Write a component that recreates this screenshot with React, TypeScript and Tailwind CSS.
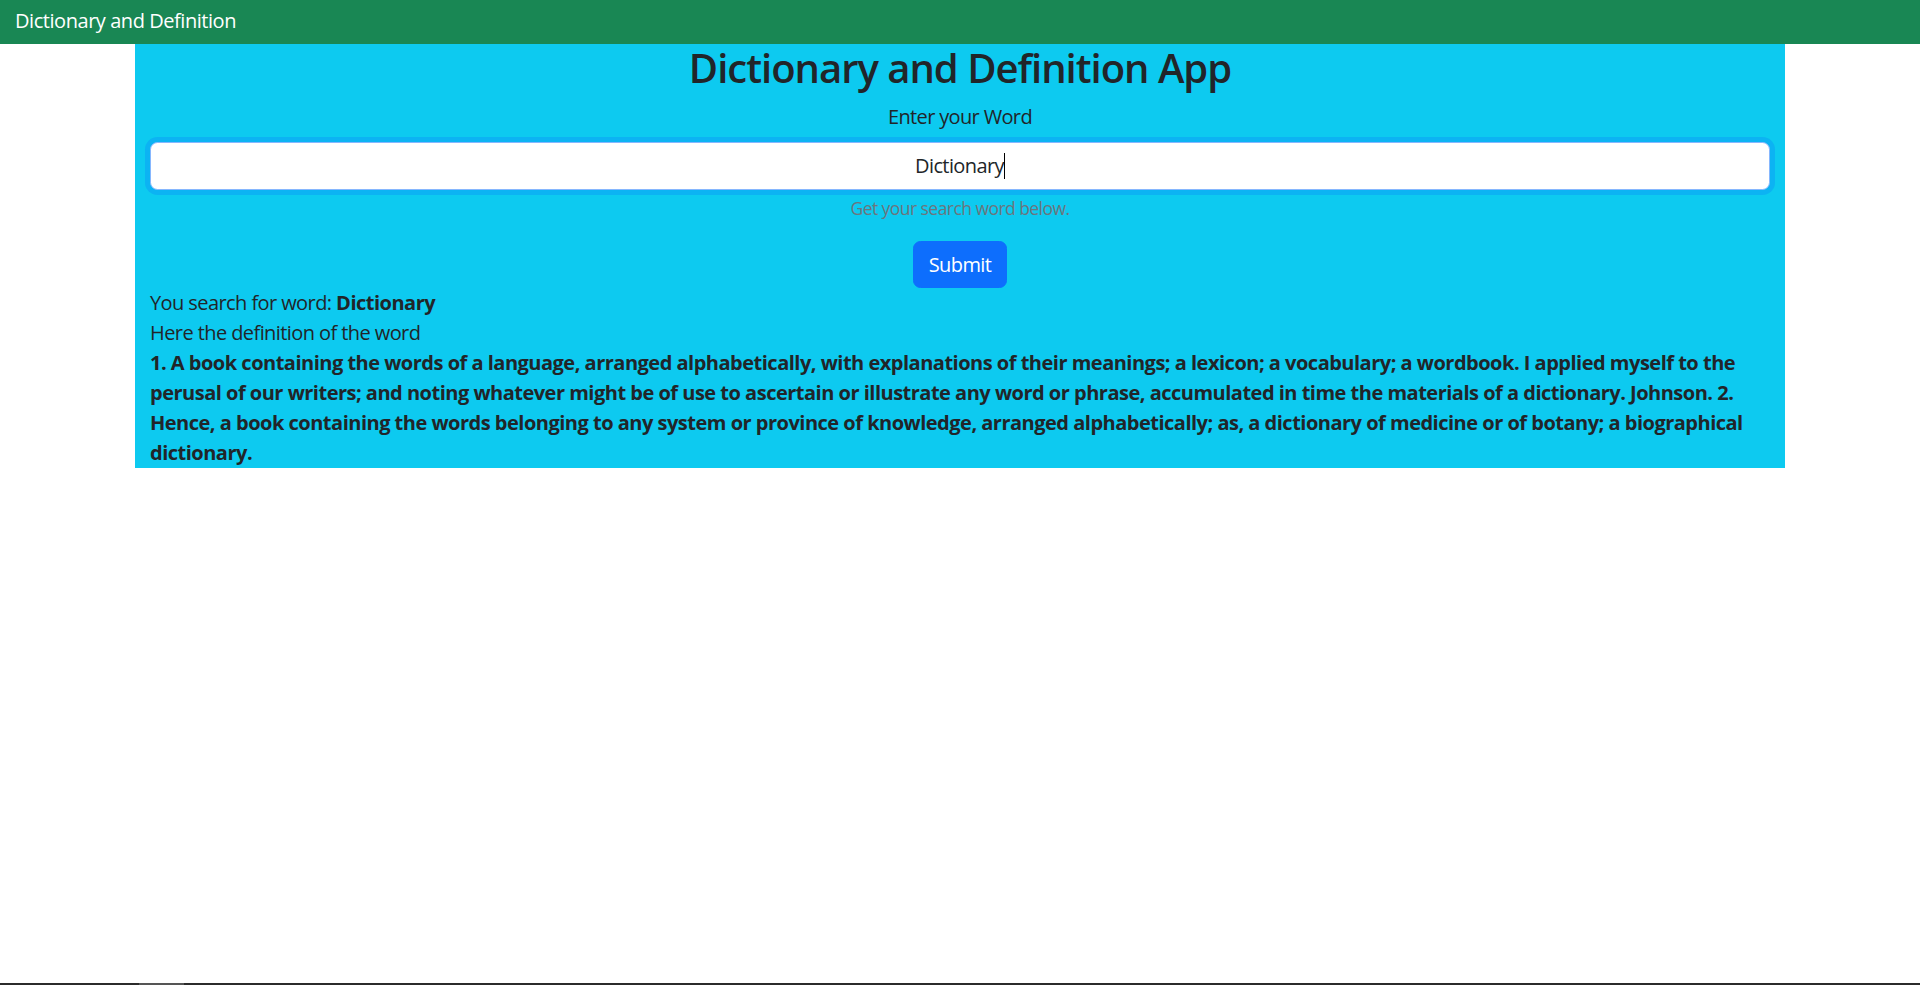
import React from "react";

const DEF =
  "1. A book containing the words of a language, arranged alphabetically, with explanations of their meanings; a lexicon; a vocabulary; a wordbook. I applied myself to the perusal of our writers; and noting whatever might be of use to ascertain or illustrate any word or phrase, accumulated in time the materials of a dictionary. Johnson. 2. Hence, a book containing the words belonging to any system or province of knowledge, arranged alphabetically; as, a dictionary of medicine or of botany; a biographical dictionary.";

export default function App() {
  return (
    <div className="flex h-[985px] flex-col bg-white text-[#212529] [font-family:'Open_Sans',sans-serif]">
      <nav className="flex h-[44px] items-center bg-[#198754] px-[15px] pb-[2px] text-[20px] tracking-[-0.45px] text-white">
        Dictionary and Definition
      </nav>
      <main className="mx-auto w-[1650px] bg-[#0dcaf0] px-[15px]">
        <h1 className="mb-[10px] text-center text-[40px] leading-[48px] font-semibold tracking-[-1px]">
          Dictionary and Definition App
        </h1>
        <div className="mb-[10px] text-center text-[20px] leading-[30px] tracking-[-0.65px]">
          Enter your Word
        </div>
        <div className="flex h-[47.5px] items-center justify-center rounded-[7.5px] border-[1.25px] border-[#86b7fe] bg-white text-[20px] tracking-[-0.6px] shadow-[0_0_0_5px_rgba(13,110,253,0.25)]">
          <span>Dictionary</span>
          <span className="inline-block h-[26px] w-px bg-black" />
        </div>
        <div className="mt-[5px] text-center text-[17.5px] leading-[26.25px] tracking-[-0.55px] text-[#6c757d]">
          Get your search word below.
        </div>
        <div className="mt-[20px] flex justify-center">
          <button className="h-[47.5px] rounded-[7.5px] border-[1.25px] border-[#0d6efd] bg-[#0d6efd] px-[15px] text-[20px] tracking-[-0.6px] text-white">
            Submit
          </button>
        </div>
        <div className="text-[20px] leading-[30px] tracking-[-0.58px]">
          <div>
            You search for word: <b className="font-bold tracking-[-0.5px]">Dictionary</b>
          </div>
          <div>Here the definition of the word</div>
          <div className="font-bold tracking-[-0.5px]">{DEF}</div>
        </div>
      </main>
      <div className="flex-1" />
      <div className="flex h-[2px] bg-[#2b2b2b]">
        <div className="ml-[139px] w-[45px] bg-[#555555]" />
      </div>
    </div>
  );
}
